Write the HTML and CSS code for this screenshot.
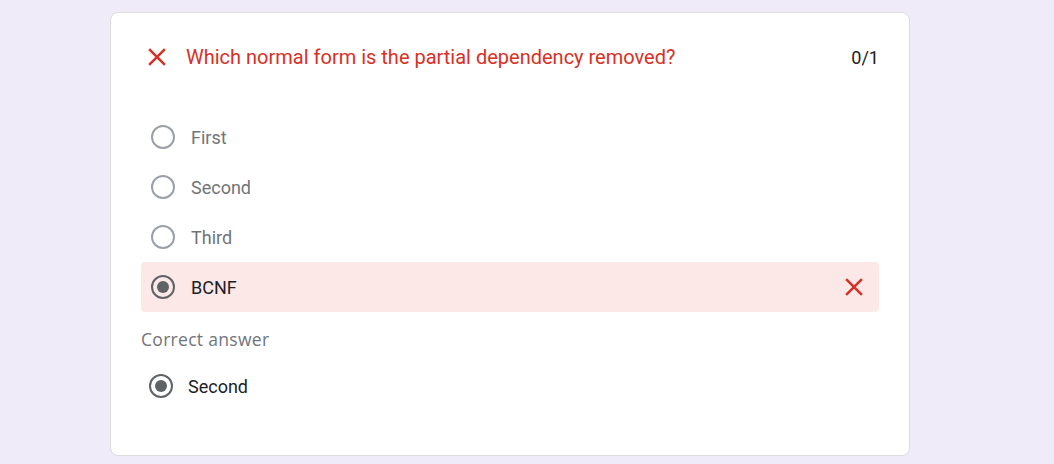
FILE: index.html
```html
<!DOCTYPE html>
<html lang="en">
<head>
<meta charset="utf-8">
<title>Quiz result</title>
<link rel="stylesheet" href="styles.css">
</head>
<body>
<div class="card">
  <div class="header">
    <svg class="xicon" width="30" height="30" viewBox="0 0 24 24"><path d="M19 6.41 17.59 5 12 10.59 6.41 5 5 6.41 10.59 12 5 17.59 6.41 19 12 13.41 17.59 19 19 17.59 13.41 12z" fill="#d93025"/></svg>
    <div class="question">Which normal form is the partial dependency removed?</div>
    <div class="score">0/1</div>
  </div>
  <div class="options">
    <div class="option"><span class="radio"></span><span class="label">First</span></div>
    <div class="option"><span class="radio"></span><span class="label">Second</span></div>
    <div class="option"><span class="radio"></span><span class="label">Third</span></div>
    <div class="option wrong"><span class="radio checked"></span><span class="label">BCNF</span>
      <svg class="xicon right" width="30" height="30" viewBox="0 0 24 24"><path d="M19 6.41 17.59 5 12 10.59 6.41 5 5 6.41 10.59 12 5 17.59 6.41 19 12 13.41 17.59 19 19 17.59 13.41 12z" fill="#d93025"/></svg>
    </div>
  </div>
  <div class="correct-title">Correct answer</div>
  <div class="correct">
    <span class="radio checked"></span><span class="label">Second</span>
  </div>
</div>
</body>
</html>
```
FILE: styles.css
```css
html, body {
  margin: 0;
  padding: 0;
}
body {
  background: #f0ebf8;
  font-family: Roboto, "Liberation Sans", Arial, sans-serif;
  height: 464px;
  overflow: hidden;
}
.card {
  box-sizing: border-box;
  width: 800px;
  margin: 12px 0 0 110px;
  background: #fff;
  border: 1px solid #dadce0;
  border-radius: 8px;
  padding: 30px 30px 44px 30px;
}
.header {
  display: flex;
  align-items: center;
  height: 28px;
}
.xicon {
  width: 30px;
  height: 30px;
  margin-left: 1px;
  flex: none;
}
.question {
  margin-left: 14px;
  color: #d93025;
  font-size: 20px;
  flex: 1;
}
.score {
  color: #202124;
  font-size: 18px;
}
.options {
  margin-top: 41px;
}
.option {
  display: flex;
  align-items: center;
  height: 50px;
  padding: 0 10px 0 10px;
  border-radius: 4px;
}
.option .label {
  margin-left: 16px;
  font-size: 18px;
  color: #70757a;
  flex: 1;
}
.option.wrong {
  background: #fce8e6;
}
.option.wrong .label {
  color: #202124;
}
.xicon.right {
  margin: 0;
}
.radio {
  box-sizing: border-box;
  width: 24px;
  height: 24px;
  border-radius: 50%;
  border: 2px solid #9aa0a6;
  flex: none;
  display: flex;
  align-items: center;
  justify-content: center;
}
.radio.checked {
  border-color: #5f6368;
}
.radio.checked::after {
  content: "";
  width: 12px;
  height: 12px;
  border-radius: 50%;
  background: #5f6368;
}
.correct-title {
  margin-top: 15px;
  height: 24px;
  line-height: 24px;
  font-family: "Open Sans", "Noto Sans", sans-serif;
  font-weight: 500;
  font-size: 17.5px;
  letter-spacing: 0.3px;
  color: #70757a;
}
.correct {
  display: flex;
  align-items: center;
  height: 50px;
  margin-top: 10px;
  padding-left: 8px;
}
.correct .label {
  margin-left: 15px;
  font-size: 18px;
  color: #202124;
}
```
